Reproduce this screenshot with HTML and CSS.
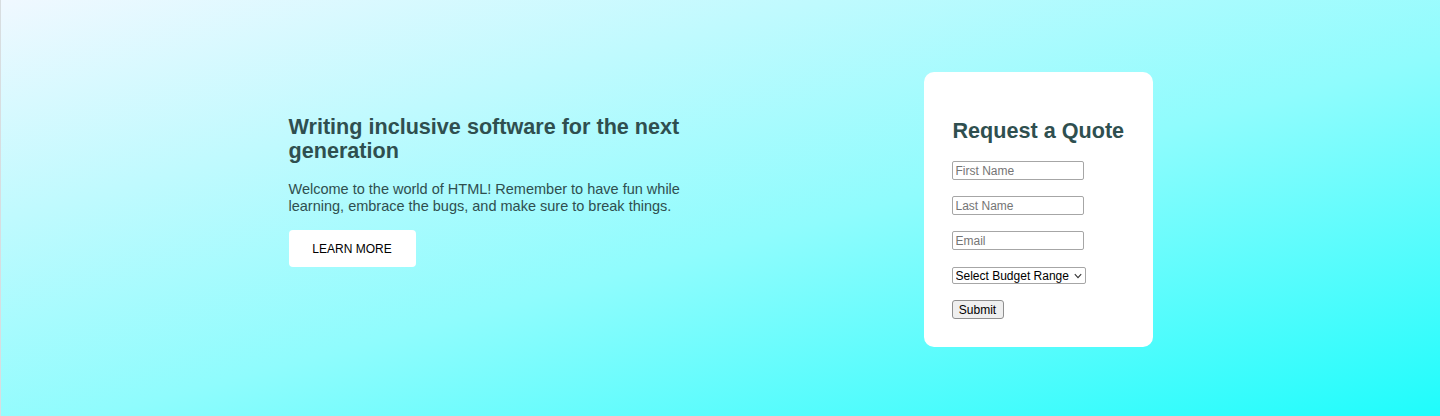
FILE: index.html
```html
<!DOCTYPE html>
<html lang="en">
<head>
<meta charset="utf-8">
<title>Request a Quote</title>
<link rel="stylesheet" href="styles.css">
</head>
<body>
<main class="hero">
  <section class="intro">
    <h1 class="intro-title">Writing inclusive software for the next generation</h1>
    <p class="intro-text">Welcome to the world of HTML! Remember to have fun while learning, embrace the bugs, and make sure to break things.</p>
    <a class="btn-learn" href="#">LEARN MORE</a>
  </section>
  <section class="quote-card">
    <h2 class="quote-title">Request a Quote</h2>
    <form class="quote-form">
      <input class="field" type="text" placeholder="First Name">
      <input class="field" type="text" placeholder="Last Name">
      <input class="field" type="email" placeholder="Email">
      <span class="select-wrap">
        <select class="field-select">
          <option>Select Budget Range</option>
        </select>
        <svg class="select-arrow" width="8" height="6" viewBox="0 0 8 6" aria-hidden="true"><path d="M0.8 1.2 L4 4.6 L7.2 1.2" fill="none" stroke="#333" stroke-width="1.1"/></svg>
      </span>
      <button class="btn-submit" type="button">Submit</button>
    </form>
  </section>
</main>
</body>
</html>
```

FILE: styles.css
```css
html, body {
  margin: 0;
  padding: 0;
}
body {
  min-height: 416px;
  background: linear-gradient(165deg, #f0f8ff 0%, #8ffcfd 55%, #1ffcfc 100%);
  font-family: "Liberation Sans", Arial, sans-serif;
  color: #2f4f4f;
  border-left: 1px solid #d8dde0;
  box-sizing: border-box;
}
.hero {
  display: flex;
  justify-content: center;
  align-items: flex-start;
  gap: 215px;
  padding-top: 72px;
}
.intro {
  width: 420px;
  margin-top: 43px;
}
.intro-title {
  font-size: 21.6px;
  line-height: 24px;
  font-weight: bold;
  margin: 0 0 18px;
}
.intro-text {
  font-size: 14.5px;
  line-height: 17px;
  margin: 0 0 15px;
}
.btn-learn {
  display: inline-flex;
  align-items: center;
  justify-content: center;
  width: 127px;
  height: 37px;
  background: #fff;
  border-radius: 4px;
  color: #000;
  font-size: 12px;
  text-decoration: none;
}
.quote-card {
  width: 229px;
  height: 275px;
  box-sizing: border-box;
  background: #fff;
  border-radius: 10px;
  padding: 46px 28px 0;
}
.quote-title {
  font-size: 21.6px;
  line-height: 26px;
  font-weight: bold;
  white-space: nowrap;
  margin: 0 0 17px 1px;
}
.quote-form {
  display: flex;
  flex-direction: column;
  align-items: flex-start;
}
.field {
  width: 132px;
  height: 19px;
  box-sizing: border-box;
  border: 1px solid #a6a6a6;
  border-radius: 2px;
  padding: 0 3px;
  font-family: "Liberation Sans", Arial, sans-serif;
  font-size: 12px;
  color: #000;
  margin: 0 0 16px;
}
.field::placeholder {
  color: #757575;
}
.select-wrap {
  position: relative;
  display: block;
  margin: 1px 0 16px;
}
.field-select {
  display: block;
  -webkit-appearance: none;
  appearance: none;
  width: 134px;
  height: 17px;
  box-sizing: border-box;
  font-family: "Liberation Sans", Arial, sans-serif;
  font-size: 12px;
  color: #000;
  border: 1px solid #a6a6a6;
  border-radius: 2px;
  background: #fff;
  padding: 0 12px 0 3px;
  margin: 0;
}
.select-arrow {
  position: absolute;
  right: 4px;
  top: 6px;
  pointer-events: none;
}
.btn-submit {
  width: 52px;
  height: 19px;
  box-sizing: border-box;
  font-family: "Liberation Sans", Arial, sans-serif;
  font-size: 12px;
  color: #000;
  background: #efefef;
  border: 1px solid #8f8f8f;
  border-radius: 3px;
  padding: 0;
}
```
